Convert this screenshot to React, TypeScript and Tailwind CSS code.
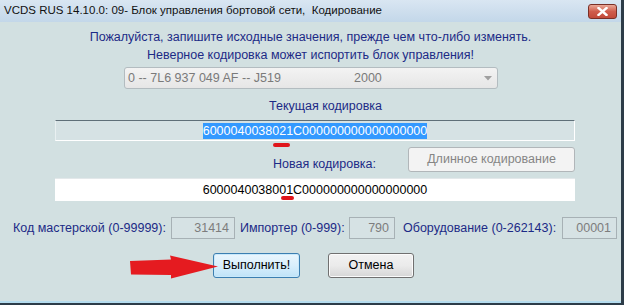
const fieldText = "6000040038021C000000000000000000";
const newText = "6000040038001C000000000000000000";

function ReadOnlyBox({ value, width }: { value: string; width: string }) {
  return (
    <div
      className={`${width} h-[22px] border border-[#a7b1b5] bg-[#d6e2e4] text-right pr-[5px] leading-[20px] text-[#7d7d7d]`}
    >
      {value}
    </div>
  );
}

export default function App() {
  return (
    <div className="relative w-[624px] h-[305px] overflow-hidden bg-[#d2e0e1] font-['Liberation_Sans',Arial,sans-serif] text-[12.5px] text-[#1c2a86] border-r-[3px] border-r-[#2d3c48] border-b-[2px] border-b-[#2d3c48]">
      {/* title bar */}
      <div className="h-[22px] flex items-center justify-between pl-[4px] pr-[4px] bg-gradient-to-b from-[#d9e6f2] to-[#c3d7e9]">
        <span className="font-['Liberation_Sans',Arial,sans-serif] text-[11.5px] text-[#111] whitespace-nowrap">
          VCDS RUS 14.10.0: 09- Блок управления бортовой сети,&nbsp; Кодирование
        </span>
        <div className="w-[29px] h-[15px] mt-[1px] rounded-[3px] border border-[#7a2f26] bg-gradient-to-b from-[#e9a898] via-[#cf5c4c] to-[#c24a3a] flex items-center justify-center">
          <svg width="11" height="9" viewBox="0 0 11 9">
            <path d="M1.5 1 L9.5 8 M9.5 1 L1.5 8" stroke="#fff" strokeWidth="2.4" strokeLinecap="square" />
          </svg>
        </div>
      </div>

      <div className="flex flex-col border-b-[2px] border-b-[#b5dcee] h-[281px]">
        {/* warning text */}
        <div className="mt-[6px] text-center leading-[18px] whitespace-nowrap">
          <p>Пожалуйста, запишите исходные значения, прежде чем что-либо изменять.</p>
          <p>Неверное кодировка может испортить блок управления!</p>
        </div>

        {/* dropdown */}
        <div className="mt-[3px] ml-[124px] w-[374px] h-[22px] rounded-[3px] border border-[#b3bcc0] bg-gradient-to-b from-[#f3f3f3] to-[#e6e6e6] flex items-center pl-[3px] text-[#7a7a7a] whitespace-nowrap">
          <span className="w-[226px]">0 -- 7L6 937 049 AF -- J519</span>
          <span>2000</span>
          <svg className="ml-auto mr-[5px]" width="8" height="5" viewBox="0 0 8 5">
            <path d="M0 0 L8 0 L4 4.5 Z" fill="#a0a0a0" />
          </svg>
        </div>

        {/* current coding */}
        <p className="mt-[8px] ml-[269px] leading-[18px] whitespace-nowrap">Текущая кодировка</p>
        <div className="mt-[5px] ml-[55px] w-[520px] h-[21px] border-t border-t-[#5f6f78] border-l border-l-[#e9f0f1] border-b border-b-[#ffffff] border-r border-r-[#ffffff] bg-[#d6e2e4] flex items-center justify-center">
          <span className="bg-[#3399ff] text-white leading-[16px]">{fieldText}</span>
        </div>

        {/* new coding label + button */}
        <div className="mt-[6px] ml-[55px] w-[520px] h-[25px] flex items-start whitespace-nowrap">
          <span className="ml-[218px] mt-[8px] leading-[18px]">Новая кодировка:</span>
          <button className="ml-auto w-[167px] h-[25px] rounded-[3px] border border-[#b1b6b9] bg-[#f3f3f3] text-[#858585]">
            Длинное кодирование
          </button>
        </div>

        {/* new coding field */}
        <div className="mt-[6px] ml-[55px] w-[520px] h-[23px] bg-white border-t border-t-[#e3e8ea] flex items-center justify-center text-black">
          {newText}
        </div>

        {/* codes row */}
        <div className="mt-[16px] ml-[13px] flex items-center whitespace-nowrap">
          <span className="w-[158px]">Код мастерской (0-99999):</span>
          <ReadOnlyBox value="31414" width="w-[64px]" />
          <span className="ml-[5px] w-[109px]">Импортер (0-999):</span>
          <ReadOnlyBox value="790" width="w-[46px]" />
          <span className="ml-[8px] w-[159px]">Оборудование (0-262143):</span>
          <ReadOnlyBox value="00001" width="w-[55px]" />
        </div>

        {/* buttons */}
        <div className="mt-[14px] ml-[213px] flex gap-[28px] text-black">
          <button className="w-[87px] h-[25px] rounded-[3px] border border-[#3c7fb1] bg-gradient-to-b from-[#eaf6fd] via-[#d9effc] to-[#bfe3f8] shadow-[inset_0_0_0_1px_#c9e9fb]">
            Выполнить!
          </button>
          <button className="w-[86px] h-[25px] rounded-[3px] border border-[#707070] bg-gradient-to-b from-[#f2f2f2] via-[#ebebeb] to-[#d6d6d6] shadow-[inset_0_0_0_1px_#fbfbfb]">
            Отмена
          </button>
        </div>
      </div>

      {/* red annotations */}
      <div className="absolute left-[273px] top-[143px] w-[17px] h-[4px] rounded-full bg-[#e0161c]" />
      <div className="absolute left-[281px] top-[196px] w-[13px] h-[4px] rounded-full bg-[#e0161c]" />
      <svg className="absolute left-0 top-0" width="624" height="305" viewBox="0 0 624 305">
        <path
          d="M130 261 L171 259.5 L170 255.5 L218 266.5 L171 278.5 L171 275 L131 274.5 Z"
          fill="#e51b20"
        />
      </svg>
    </div>
  );
}
